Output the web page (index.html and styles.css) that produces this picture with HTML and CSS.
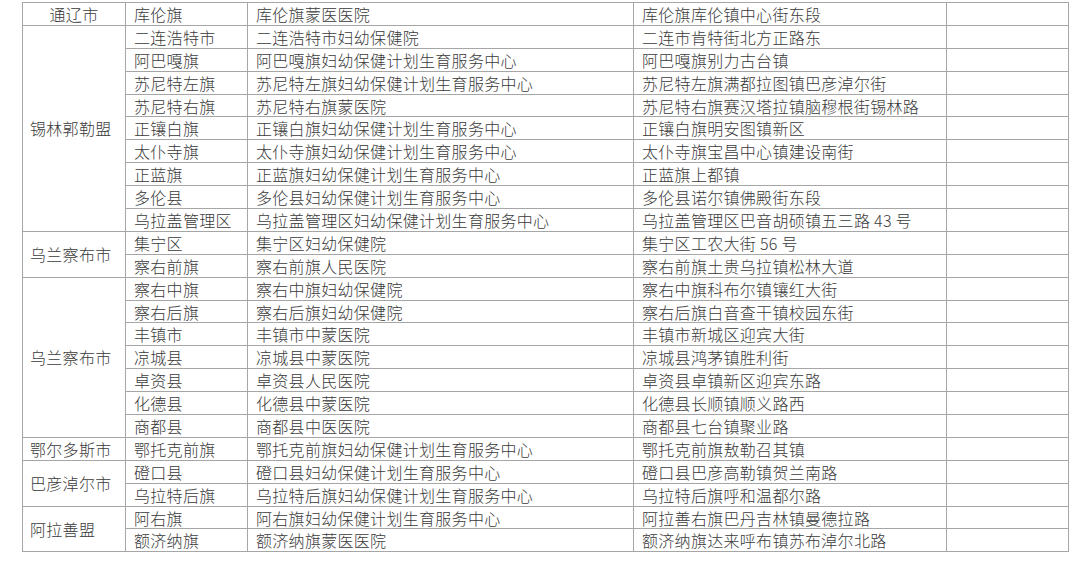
FILE: index.html
```html
<!DOCTYPE html>
<html lang="zh">
<head>
<meta charset="utf-8">
<link rel="stylesheet" href="styles.css">
</head>
<body>
<table class="list">
<colgroup>
<col class="c1"><col class="c2"><col class="c3"><col class="c4"><col class="c5">
</colgroup>
<tbody>
<tr><td class="city center">通辽市</td><td>库伦旗</td><td>库伦旗蒙医医院</td><td>库伦旗库伦镇中心街东段</td><td></td></tr>
<tr><td class="city" rowspan="9">锡林郭勒盟</td><td>二连浩特市</td><td>二连浩特市妇幼保健院</td><td>二连市肯特街北方正路东</td><td></td></tr>
<tr><td>阿巴嘎旗</td><td>阿巴嘎旗妇幼保健计划生育服务中心</td><td>阿巴嘎旗别力古台镇</td><td></td></tr>
<tr><td>苏尼特左旗</td><td>苏尼特左旗妇幼保健计划生育服务中心</td><td>苏尼特左旗满都拉图镇巴彦淖尔街</td><td></td></tr>
<tr><td>苏尼特右旗</td><td>苏尼特右旗蒙医院</td><td>苏尼特右旗赛汉塔拉镇脑穆根街锡林路</td><td></td></tr>
<tr><td>正镶白旗</td><td>正镶白旗妇幼保健计划生育服务中心</td><td>正镶白旗明安图镇新区</td><td></td></tr>
<tr><td>太仆寺旗</td><td>太仆寺旗妇幼保健计划生育服务中心</td><td>太仆寺旗宝昌中心镇建设南街</td><td></td></tr>
<tr><td>正蓝旗</td><td>正蓝旗妇幼保健计划生育服务中心</td><td>正蓝旗上都镇</td><td></td></tr>
<tr><td>多伦县</td><td>多伦县妇幼保健计划生育服务中心</td><td>多伦县诺尔镇佛殿街东段</td><td></td></tr>
<tr><td>乌拉盖管理区</td><td>乌拉盖管理区妇幼保健计划生育服务中心</td><td>乌拉盖管理区巴音胡硕镇五三路 43 号</td><td></td></tr>
<tr><td class="city" rowspan="2">乌兰察布市</td><td>集宁区</td><td>集宁区妇幼保健院</td><td>集宁区工农大街 56 号</td><td></td></tr>
<tr><td>察右前旗</td><td>察右前旗人民医院</td><td>察右前旗土贵乌拉镇松林大道</td><td></td></tr>
<tr><td class="city" rowspan="7">乌兰察布市</td><td>察右中旗</td><td>察右中旗妇幼保健院</td><td>察右中旗科布尔镇镶红大街</td><td></td></tr>
<tr><td>察右后旗</td><td>察右后旗妇幼保健院</td><td>察右后旗白音查干镇校园东街</td><td></td></tr>
<tr><td>丰镇市</td><td>丰镇市中蒙医院</td><td>丰镇市新城区迎宾大街</td><td></td></tr>
<tr><td>凉城县</td><td>凉城县中蒙医院</td><td>凉城县鸿茅镇胜利街</td><td></td></tr>
<tr><td>卓资县</td><td>卓资县人民医院</td><td>卓资县卓镇新区迎宾东路</td><td></td></tr>
<tr><td>化德县</td><td>化德县中蒙医院</td><td>化德县长顺镇顺义路西</td><td></td></tr>
<tr><td>商都县</td><td>商都县中医医院</td><td>商都县七台镇聚业路</td><td></td></tr>
<tr><td class="city">鄂尔多斯市</td><td>鄂托克前旗</td><td>鄂托克前旗妇幼保健计划生育服务中心</td><td>鄂托克前旗敖勒召其镇</td><td></td></tr>
<tr><td class="city" rowspan="2">巴彦淖尔市</td><td>磴口县</td><td>磴口县妇幼保健计划生育服务中心</td><td>磴口县巴彦高勒镇贺兰南路</td><td></td></tr>
<tr><td>乌拉特后旗</td><td>乌拉特后旗妇幼保健计划生育服务中心</td><td>乌拉特后旗呼和温都尔路</td><td></td></tr>
<tr><td class="city" rowspan="2">阿拉善盟</td><td>阿右旗</td><td>阿右旗妇幼保健计划生育服务中心</td><td>阿拉善右旗巴丹吉林镇曼德拉路</td><td></td></tr>
<tr><td>额济纳旗</td><td>额济纳旗蒙医医院</td><td>额济纳旗达来呼布镇苏布淖尔北路</td><td></td></tr>
</tbody>
</table>
</body>
</html>
```

FILE: styles.css
```css
html, body {
  margin: 0;
  padding: 0;
  background: #ffffff;
}

body {
  padding: 2px 0 0 22px;
  font-family: "Noto Sans CJK SC", "Noto Sans", sans-serif;
  font-weight: 300;
  color: #3a3a3a;
}

.list {
  border-collapse: collapse;
  table-layout: fixed;
  width: 1046px;
  font-size: 16px;
}

.c1 { width: 103px; }
.c2 { width: 122px; }
.c3 { width: 386px; }
.c4 { width: 313px; }
.c5 { width: 122px; }

.list td {
  border: 1px solid #a6a6a6;
  height: 21.9px;
  padding: 0 0 0 8px;
  line-height: 20px;
  white-space: nowrap;
  vertical-align: middle;
  letter-spacing: 0.3px;
}

.list td.city {
  padding-left: 7px;
}

.list td.center {
  text-align: center;
  padding-left: 0;
}
```
